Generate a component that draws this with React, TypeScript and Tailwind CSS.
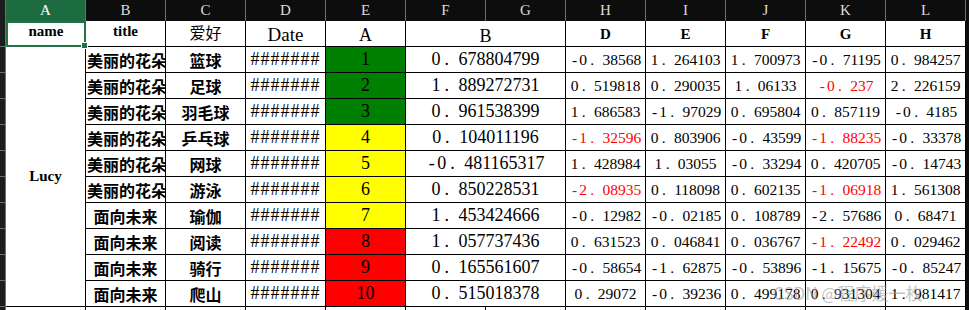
import React from "react";

const GREEN = "bg-[#008000]";
const YELLOW = "bg-[#ffff00]";
const RED = "bg-[#ff0000]";

type Row = {
  title: string;
  hobby: string;
  a: number;
  fill: string;
  b: string;
  vals: [string, boolean][];
};

const ROWS: Row[] = [
  { title: "美丽的花朵", hobby: "篮球", a: 1, fill: GREEN, b: "0.678804799", vals: [["-0.38568", false], ["1.264103", false], ["1.700973", false], ["-0.71195", false], ["0.984257", false]] },
  { title: "美丽的花朵", hobby: "足球", a: 2, fill: GREEN, b: "1.889272731", vals: [["0.519818", false], ["0.290035", false], ["1.06133", false], ["-0.237", true], ["2.226159", false]] },
  { title: "美丽的花朵", hobby: "羽毛球", a: 3, fill: GREEN, b: "0.961538399", vals: [["1.686583", false], ["-1.97029", false], ["0.695804", false], ["0.857119", false], ["-0.4185", false]] },
  { title: "美丽的花朵", hobby: "乒乓球", a: 4, fill: YELLOW, b: "0.104011196", vals: [["-1.32596", true], ["0.803906", false], ["-0.43599", false], ["-1.88235", true], ["-0.33378", false]] },
  { title: "美丽的花朵", hobby: "网球", a: 5, fill: YELLOW, b: "-0.481165317", vals: [["1.428984", false], ["1.03055", false], ["-0.33294", false], ["0.420705", false], ["-0.14743", false]] },
  { title: "美丽的花朵", hobby: "游泳", a: 6, fill: YELLOW, b: "0.850228531", vals: [["-2.08935", true], ["0.118098", false], ["0.602135", false], ["-1.06918", true], ["1.561308", false]] },
  { title: "面向未来", hobby: "瑜伽", a: 7, fill: YELLOW, b: "1.453424666", vals: [["-0.12982", false], ["-0.02185", false], ["0.108789", false], ["-2.57686", false], ["0.68471", false]] },
  { title: "面向未来", hobby: "阅读", a: 8, fill: RED, b: "1.057737436", vals: [["0.631523", false], ["0.046841", false], ["0.036767", false], ["-1.22492", true], ["0.029462", false]] },
  { title: "面向未来", hobby: "骑行", a: 9, fill: RED, b: "0.165561607", vals: [["-0.58654", false], ["-1.62875", false], ["-0.53896", false], ["-1.15675", false], ["-0.85247", false]] },
  { title: "面向未来", hobby: "爬山", a: 10, fill: RED, b: "0.515018378", vals: [["0.29072", false], ["-0.39236", false], ["0.499178", false], ["0.931304", false], ["1.981417", false]] },
];

const COLS = ["A", "B", "C", "D", "E", "F", "G", "H", "I", "J", "K", "L"];

const serif = "font-['Liberation_Serif','Noto_Sans_CJK_SC',serif]";
const cjk = "font-['Noto_Sans_CJK_SC',sans-serif]";
const cell = "border-r border-b border-black flex items-center justify-center overflow-hidden whitespace-nowrap";
const head = `${cell} bg-white leading-none`;

// numbers render with a wide decimal point, like the sheet's font
function Num({ v }: { v: string }) {
  const neg = v.startsWith("-");
  const [int, frac] = (neg ? v.slice(1) : v).split(".");
  return (
    <span>
      {neg && <span className="inline-block w-[0.6em] text-center">-</span>}
      {int}
      <span className="inline-block w-[1em] pl-[0.22em]">.</span>
      {frac}
    </span>
  );
}

function Strip() {
  return <div className="bg-[#1c1c1c] border-r border-b border-[#6e6e6e]" />;
}

export default function App() {
  return (
    <div className="relative w-[969px] h-[310px] overflow-hidden bg-[#0d0d0d]">
      <div className={`grid grid-cols-[6px_repeat(12,80px)_3px] grid-rows-[21px_repeat(12,26px)] ${serif}`}>
        {/* column letters */}
        <div className="bg-[#1c1c1c] border-r border-[#6e6e6e]" />
        {COLS.map((c, i) => (
          <div
            key={c}
            className={`flex items-center justify-center text-[15px] border-r border-[#6e6e6e] ${
              i === 0 ? "bg-[#1d6b40] text-white" : "bg-[#0d0d0d] text-[#dcdcdc]"
            }`}
          >
            {c}
          </div>
        ))}
        <div className="bg-[#0d0d0d]" />

        {/* header row */}
        <Strip />
        <div className="relative bg-white border-2 border-[#217346] flex items-center justify-center pb-[6px] leading-none text-[15px] font-bold text-black">
          name
          <div className="absolute -right-[4px] -bottom-[4px] w-[7px] h-[7px] bg-[#217346] border border-white" />
        </div>
        <div className={`${head} pb-[5px] text-[15px] font-bold`}>title</div>
        <div className={`${head} pb-[4px] text-[16px] ${cjk}`}>爱好</div>
        <div className={`${head} pt-[2px] text-[19px]`}>Date</div>
        <div className={`${head} pt-[2px] text-[18px]`}>A</div>
        <div className={`${head} col-span-2 pt-[5px] text-[18px]`}>B</div>
        {["D", "E", "F", "G", "H"].map((h) => (
          <div key={h} className={`${head} pt-[2px] text-[15px] font-bold`}>
            {h}
          </div>
        ))}
        <div className="bg-[#0d0d0d]" />

        {ROWS.map((r, ri) => (
          <React.Fragment key={ri}>
            <Strip />
            {ri === 0 && (
              <div className={`${cell} bg-white row-span-10 text-[15px] font-bold`}>Lucy</div>
            )}
            <div
              className={`${cell} bg-white text-[16px] font-bold ${cjk} ${
                r.title.length > 4 ? "!justify-start pl-[1px]" : ""
              }`}
            >
              {r.title}
            </div>
            <div className={`${cell} bg-white text-[16px] font-bold ${cjk}`}>{r.hobby}</div>
            <div className={`${cell} bg-white text-[18px] tracking-[1px]`}>#######</div>
            <div className={`${cell} ${r.fill} text-[18px]`}>{r.a}</div>
            <div className={`${cell} bg-white col-span-2 text-[18px]`}>
              <Num v={r.b} />
            </div>
            {r.vals.map(([v, red], vi) => (
              <div key={vi} className={`${cell} bg-white text-[15.5px] ${red ? "text-[#ff0000]" : "text-black"}`}>
                <Num v={v} />
              </div>
            ))}
            <div className="bg-[#0d0d0d]" />
          </React.Fragment>
        ))}

        {/* trailing row */}
        <Strip />
        {COLS.map((c) => (
          <div key={c} className="bg-white border-r border-black" />
        ))}
        <div className="bg-[#0d0d0d]" />
      </div>

      {/* watermark */}
      <div className={`absolute left-[773px] top-[280px] text-[17px] text-[#9a9a9a]/60 ${cjk}`}>
        CSDN @程序媛一枚
      </div>
    </div>
  );
}
